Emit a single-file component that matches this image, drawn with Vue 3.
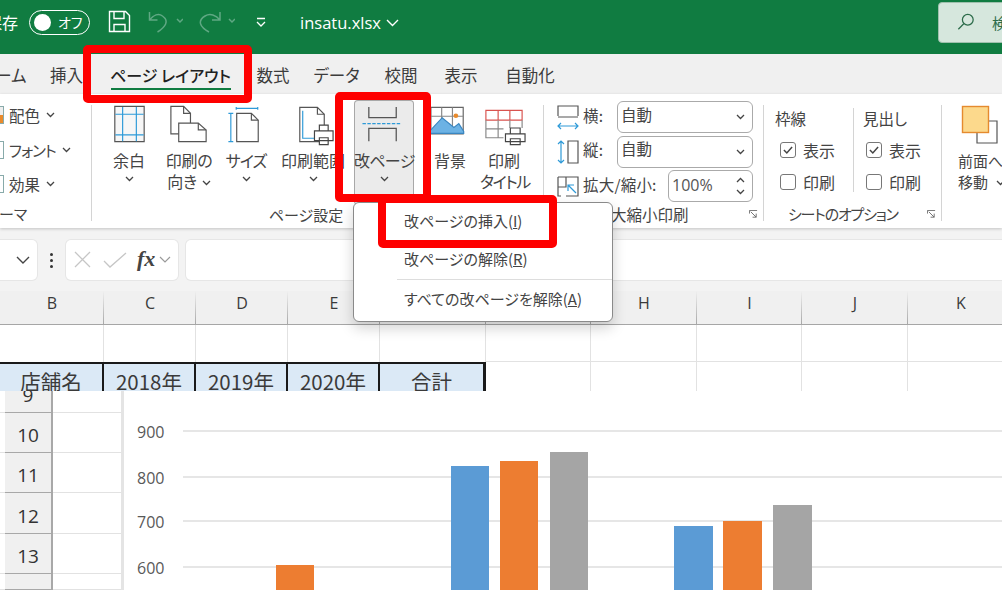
<script setup>
const tabs = [
  { text: 'ーム', w: 52 },
  { text: '挿入', w: 59 },
  { text: 'ページ レイアウト', w: 147, active: true },
  { text: '数式', w: 60 },
  { text: 'データ', w: 67 },
  { text: '校閲', w: 62 },
  { text: '表示', w: 58 },
  { text: '自動化', w: 80 }
]
const cols = [
  { l: 'B', w: 104 }, { l: 'C', w: 92 }, { l: 'D', w: 92 }, { l: 'E', w: 92 },
  { l: '', w: 106 }, { l: '', w: 105 }, { l: 'H', w: 106 }, { l: 'I', w: 105 },
  { l: 'J', w: 106 }, { l: 'K', w: 106 }
]
const tableCells = ['店舗名', '2018年', '2019年', '2020年', '合計']
const rows = [
  { n: 9, h: 22 }, { n: 10, h: 40 }, { n: 11, h: 40 },
  { n: 12, h: 41 }, { n: 13, h: 40 }, { n: '', h: 16 }
]
const grid = [
  { t: '900', y: 431 }, { t: '800', y: 477 }, { t: '700', y: 521 }, { t: '600', y: 567 }
]
const bars = [
  { x: 276, w: 38, y: 565, c: '#ed7d31' },
  { x: 451, w: 38, y: 466, c: '#5b9bd5' },
  { x: 500, w: 38, y: 461, c: '#ed7d31' },
  { x: 550, w: 38, y: 452, c: '#a5a5a5' },
  { x: 674, w: 39, y: 526, c: '#5b9bd5' },
  { x: 723, w: 39, y: 521, c: '#ed7d31' },
  { x: 773, w: 39, y: 505, c: '#a5a5a5' }
]
</script>

<template>
  <div class="page">
    <header class="title">
      <span class="save-label">保存</span>
      <div class="toggle"><i class="knob"></i><span>オフ</span></div>
      <svg class="qat" width="24" height="24" viewBox="107 10 24 24" fill="none" stroke="#fff" stroke-width="1.4">
        <path d="M108.5 11.5h16l4 4v16h-20z" />
        <path d="M113 11.5v7h10v-7M113 31.5v-7h11v7" />
      </svg>
      <svg class="undo" width="36" height="24" viewBox="146 10 36 24" fill="none" stroke="#5fa883" stroke-width="1.5">
        <path d="M148.5 12v8h8M148.5 20c4-5 9-7 13-4 7 5 3 11-5 16" />
        <path d="M176 19l3 3 3-3" />
      </svg>
      <svg class="redo" width="36" height="24" viewBox="198 10 36 24" fill="none" stroke="#5fa883" stroke-width="1.5">
        <path d="M219 12v8h-8M219 20c-4-5-10-7-15-4-8 5-5 11 4 16" />
        <path d="M228 19l3 3 3-3" />
      </svg>
      <svg class="custom" width="12" height="12" viewBox="0 0 12 12" fill="none" stroke="#fff" stroke-width="1.3">
        <path d="M2 2.5h8M2 6l4 4 4-4" />
      </svg>
      <span class="fname">insatu.xlsx</span>
      <svg class="fchev" width="13" height="8" viewBox="0 0 13 8" fill="none" stroke="#fff" stroke-width="1.4">
        <path d="M1 1l5.5 5.5L12 1" />
      </svg>
      <div class="search">
        <svg width="20" height="20" viewBox="0 0 20 20" fill="none" stroke="#2b6b49" stroke-width="1.4">
          <circle cx="12" cy="7.5" r="6" />
          <path d="M7.5 12L1.5 18" />
        </svg>
        <span>検</span>
      </div>
    </header>

    <nav class="tabs">
      <span
        v-for="t in tabs"
        :key="t.text"
        class="tab"
        :class="{ active: t.active }"
        :style="{ width: t.w + 'px' }"
      >{{ t.text }}</span>
    </nav>

    <section class="ribbon">
      <div class="group g-theme">
        <div class="theme-list">
          <div class="theme-row">
            <i class="swatch orange"></i><span>配色</span>
            <svg class="chev" viewBox="0 0 9 6"><path d="M1 1l3.5 3.5L8 1" /></svg>
          </div>
          <div class="theme-row">
            <i class="swatch"></i><span class="tight">フォント</span>
            <svg class="chev" viewBox="0 0 9 6"><path d="M1 1l3.5 3.5L8 1" /></svg>
          </div>
          <div class="theme-row">
            <i class="swatch"></i><span>効果</span>
            <svg class="chev" viewBox="0 0 9 6"><path d="M1 1l3.5 3.5L8 1" /></svg>
          </div>
        </div>
        <div class="glabel left">ーマ</div>
      </div>
      <i class="sep"></i>

      <div class="group g-page">
        <div class="buttons">
          <div class="rb b1">
            <svg viewBox="100 104 58 47" fill="none" stroke-width="1.2">
              <path d="M114.5 106.5h30v36h-30z" fill="#f6f6f6" stroke="#555" />
              <path d="M122.5 107v35M136.5 107v35M115 114.5h29M115 135.5h29" stroke="#2e9ad8" />
            </svg>
            <div class="lbl">余白</div>
            <svg class="chev big" viewBox="0 0 9 6"><path d="M1 1l3.5 3.5L8 1" /></svg>
          </div>
          <div class="rb b2">
            <svg viewBox="158 104 62 47" fill="none" stroke="#555" stroke-width="1.2">
              <path d="M170.5 106.5h13l7 7v21h-20z" fill="#fff" />
              <path d="M183.5 106.5v7h7" />
              <path d="M178.5 123.5h20l8 7v12h-28z" fill="#fff" />
              <path d="M198.5 123.5v7h8" />
            </svg>
            <div class="lbl">印刷の<br />向き<svg class="chev inl" viewBox="0 0 9 6"><path d="M1 1l3.5 3.5L8 1" /></svg></div>
          </div>
          <div class="rb b3">
            <svg viewBox="220 104 52 47" fill="none" stroke-width="1.2">
              <path d="M236.5 113.5h15l7 7v22h-22z" fill="#fff" stroke="#555" />
              <path d="M251.5 113.5v7h7" stroke="#555" />
              <path d="M236 107v3M258 107v3M236 108.5h22M228 113.5h5M228 142.5h5M230.5 113.5v29" stroke="#2e9ad8" />
            </svg>
            <div class="lbl">サイズ</div>
            <svg class="chev big" viewBox="0 0 9 6"><path d="M1 1l3.5 3.5L8 1" /></svg>
          </div>
          <div class="rb b4">
            <svg viewBox="272 104 82 47" fill="none" stroke-width="1.2">
              <path d="M299.5 107.5h18l7 7v28h-25z" fill="#fff" stroke="#555" />
              <path d="M317.5 107.5v7h7" stroke="#555" />
              <path d="M302.5 111v28h12" stroke="#2e9ad8" />
              <path d="M319.5 125.5h9v6h-9zM314.5 131.5h19v10h-19zM319.5 138.5h9v7h-9z" fill="#fff" stroke="#444" />
            </svg>
            <div class="lbl">印刷範囲</div>
            <svg class="chev big" viewBox="0 0 9 6"><path d="M1 1l3.5 3.5L8 1" /></svg>
          </div>
          <div class="rb b5">
            <svg viewBox="354 104 60 47" fill="none" stroke-width="1.3">
              <path d="M368.5 107v11h28v-11" stroke="#555" />
              <path d="M362 124h40" stroke="#2e9ad8" stroke-dasharray="3.5 1.5" />
              <path d="M368.5 142v-13h28v13" stroke="#555" />
            </svg>
            <div class="lbl">改ページ</div>
            <svg class="chev big" viewBox="0 0 9 6"><path d="M1 1l3.5 3.5L8 1" /></svg>
          </div>
          <div class="rb b6">
            <svg viewBox="420 104 60 47" fill="none" stroke-width="1.2">
              <path d="M430.5 107.5h33v27h-33z" fill="#fff" stroke="#666" />
              <path d="M430.5 116.5h33M441.5 107.5v12M452.5 107.5v27" stroke="#888" />
              <path d="M430 131l12-13 12 10 5-4 5 8v2h-22l-12 0z" fill="#6cb2e4" stroke="#3a86c0" />
              <circle cx="456" cy="116" r="2.4" fill="#e98a2c" />
            </svg>
            <div class="lbl">背景</div>
          </div>
          <div class="rb b7">
            <svg viewBox="480 104 48 47" fill="none" stroke-width="1.2">
              <path d="M485.5 110.5h37v10h-37zM498 110.5v10M510 110.5v10" stroke="#d9534f" fill="#fff" />
              <path d="M485.5 120.5v18h18M498 120.5v18M510 120.5v8M485.5 129.5h18M522.5 120.5v8" stroke="#888" />
              <path d="M510.5 128.5h10v6h-10zM505.5 134.5h20v8h-20zM510.5 139.5h10v6h-10z" fill="#fff" stroke="#444" />
            </svg>
            <div class="lbl">印刷<br /><span class="narrow">タイトル</span></div>
          </div>
        </div>
        <div class="glabel page-label">ページ設定</div>
      </div>
      <i class="sep"></i>

      <div class="group g-scale">
        <div class="scale-rows">
          <div class="scale-row">
            <svg width="24" height="26" viewBox="556 103 24 26" fill="none" stroke-width="1.2">
              <path d="M558 114v-9h20v9M558 114v1M578 114v1M558 116h20" stroke="#555" />
              <path d="M558 125h20M561 122l-3 3 3 3M575 122l3 3-3 3" stroke="#2e9ad8" />
            </svg>
            <span class="s-label">横:</span>
            <div class="select"><span>自動</span><svg class="chev" viewBox="0 0 9 6"><path d="M1 1l3.5 3.5L8 1" /></svg></div>
          </div>
          <div class="scale-row">
            <svg width="24" height="26" viewBox="556 138 24 26" fill="none" stroke-width="1.2">
              <path d="M561 140v22M558 143l3-3 3 3M558 159l3 3 3-3" stroke="#2e9ad8" />
              <path d="M568 140h10v22h-10z" stroke="#555" />
            </svg>
            <span class="s-label">縦:</span>
            <div class="select"><span>自動</span><svg class="chev" viewBox="0 0 9 6"><path d="M1 1l3.5 3.5L8 1" /></svg></div>
          </div>
          <div class="scale-row">
            <svg width="24" height="24" viewBox="556 173 24 24" fill="none" stroke-width="1.2">
              <path d="M566 176h12v19h-12M558 176h8v10h-8v-10M558 186v9h3" stroke="#555" />
              <path d="M576 192l-8-8M568 190v-6h6" stroke="#2e9ad8" />
            </svg>
            <span class="s-label">拡大/縮小:</span>
            <div class="select spin">
              <span>100%</span>
              <div class="spin-arrows">
                <svg class="chev" viewBox="0 0 9 6"><path d="M1 5l3.5-3.5L8 5" /></svg>
                <svg class="chev" viewBox="0 0 9 6"><path d="M1 1l3.5 3.5L8 1" /></svg>
              </div>
            </div>
          </div>
        </div>
        <div class="glabel scale-label">
          <span>大縮小印刷</span>
          <svg class="launch" viewBox="0 0 10 10"><path d="M.5 4V.5H9M2 2l6 6M8 4v4H4" /></svg>
        </div>
      </div>
      <i class="sep"></i>

      <div class="group g-sheet">
        <div class="sheet-cols">
          <div class="sheet-col">
            <div class="sc-title">枠線</div>
            <div class="chk"><i class="box on"><svg viewBox="0 0 12 12"><path d="M2.5 6l2.5 2.5 4.5-5" /></svg></i>表示</div>
            <div class="chk"><i class="box"></i>印刷</div>
          </div>
          <i class="inner-sep"></i>
          <div class="sheet-col second">
            <div class="sc-title">見出し</div>
            <div class="chk"><i class="box on"><svg viewBox="0 0 12 12"><path d="M2.5 6l2.5 2.5 4.5-5" /></svg></i>表示</div>
            <div class="chk"><i class="box"></i>印刷</div>
          </div>
        </div>
        <div class="glabel sheet-label">
          <span>シートのオプション</span>
          <svg class="launch" viewBox="0 0 10 10"><path d="M.5 4V.5H9M2 2l6 6M8 4v4H4" /></svg>
        </div>
      </div>
      <i class="sep"></i>

      <div class="group g-arrange">
        <svg class="front" width="44" height="40" viewBox="958 104 44 40" fill="none">
          <path d="M977 121h20v22h-20z" stroke="#555" stroke-width="1.2" fill="#fff" />
          <rect x="962.5" y="106.5" width="26" height="26" fill="#fcd98c" stroke="#e58a2e" stroke-width="1.4" />
        </svg>
        <div class="lbl arr">前面へ<br />移動 <svg class="chev inl" viewBox="0 0 9 6"><path d="M1 1l3.5 3.5L8 1" /></svg></div>
      </div>
    </section>

    <div class="fbar">
      <div class="namebox">
        <svg width="14" height="9" viewBox="0 0 14 9" fill="none" stroke="#444" stroke-width="1.4"><path d="M1 1l6 6 6-6" /></svg>
      </div>
      <div class="dots"><i></i><i></i><i></i></div>
      <div class="fxbox">
        <svg width="56" height="20" viewBox="0 0 56 20" fill="none" stroke-width="1.3">
          <path d="M2 2l15 15M17 2L2 17" stroke="#c6c6c6" />
          <path d="M31 11l6 6L53 3" stroke="#c6c6c6" />
        </svg>
        <em>fx</em>
        <svg width="12" height="8" viewBox="0 0 12 8" fill="none" stroke="#9a9a9a" stroke-width="1.2"><path d="M1 1l5 5 5-5" /></svg>
      </div>
      <div class="finput"></div>
    </div>

    <div class="colhead">
      <div v-for="(c, i) in cols" :key="i" class="colcell" :style="{ width: c.w + 'px' }">{{ c.l }}</div>
    </div>

    <div class="sheet-row blank">
      <div v-for="(c, i) in cols" :key="i" class="cell" :style="{ width: c.w + 'px' }"></div>
    </div>
    <div class="sheet-row data">
      <div
        v-for="(c, i) in cols"
        :key="i"
        class="cell"
        :class="{ tcell: i < 5, last: i === 4 }"
        :style="{ width: c.w + 'px' }"
      >{{ tableCells[i] }}</div>
    </div>

    <div class="lower">
      <div class="rowlist">
        <div v-for="r in rows" :key="r.n" class="lrow" :style="{ height: r.h + 'px' }">
          <div class="rhead"><span>{{ r.n }}</span></div>
          <div class="rcell"></div>
        </div>
      </div>
      <svg class="chart" viewBox="125 391 877 199" width="877" height="199">
        <g v-for="g in grid" :key="g.t">
          <line x1="183" x2="1002" :y1="g.y" :y2="g.y" stroke="#dedede" stroke-width="1.5" />
          <text x="137" :y="g.y + 7" class="axis">{{ g.t }}</text>
        </g>
        <rect
          v-for="(b, i) in bars"
          :key="i"
          :x="b.x"
          :y="b.y"
          :width="b.w"
          :height="590 - b.y"
          :fill="b.c"
        />
      </svg>
    </div>

    <div class="menu">
      <div class="mitem">改ページの挿入(<u>I</u>)</div>
      <div class="mitem">改ページの解除(<u>R</u>)</div>
      <div class="mline"></div>
      <div class="mitem">すべての改ページを解除(<u>A</u>)</div>
    </div>

    <div class="mark m1"></div>
    <div class="mark m2"></div>
    <div class="mark m3"></div>
  </div>
</template>

<style>
html, body { margin: 0; padding: 0; overflow: hidden; background: #fff; }
</style>

<style scoped>
.page {
  position: relative;
  width: 1002px;
  height: 590px;
  overflow: hidden;
  background: #fff;
  color: #444;
  font-family: "Noto Sans CJK JP", sans-serif;
  font-feature-settings: "palt";
  font-size: 15px;
}
svg { display: block; }

/* title bar */
.title {
  height: 54px;
  background: #107c41;
  color: #fff;
  display: flex;
  align-items: center;
  overflow: hidden;
}
.save-label { margin-left: -14px; width: 32px; font-size: 16px; padding-bottom: 10px; }
.toggle {
  margin: 0 0 10px 11px;
  width: 61px;
  height: 25px;
  box-sizing: border-box;
  border: 1.5px solid #fff;
  border-radius: 13px;
  display: flex;
  align-items: center;
  font-size: 14px;
}
.knob { width: 17px; height: 17px; margin-left: 4px; background: #fff; border-radius: 50%; }
.toggle span { margin-left: 7px; }
.qat { margin: 0 0 10px 18px; }
.undo { margin: 0 0 10px 15px; }
.redo { margin: 0 0 10px 16px; }
.custom { margin: 0 0 10px 20px; }
.fname { margin: 0 0 10px 33px; font: 16.5px "Open Sans", sans-serif; }
.fchev { margin: 0 0 8px 5px; }
.search {
  margin: -10px -6px 0 auto;
  width: 70px;
  height: 41px;
  box-sizing: border-box;
  padding-left: 18px;
  display: flex;
  align-items: center;
  gap: 17px;
  background: #d6e7dd;
  border: 1px solid #9fc0ad;
  border-radius: 4px;
  color: #2b6b49;
  white-space: nowrap;
}

/* tabs */
.tabs {
  height: 40px;
  margin-left: -15px;
  background: #f0f0f0;
  display: flex;
  font-size: 16.5px;
  color: #3c3c3c;
}
.tab {
  position: relative;
  flex: none;
  box-sizing: border-box;
  text-align: center;
  line-height: 42px;
}
.tab.active { font-size: 16px; font-weight: 500; color: #222; padding-left: 2px; }
.tab.active::after {
  content: "";
  position: absolute;
  left: 15px;
  right: 12px;
  top: 34px;
  height: 2px;
  background: #107c41;
}

/* ribbon */
.ribbon {
  height: 134px;
  display: flex;
  background: #fff;
  box-shadow: 0 1px 3px rgba(0, 0, 0, .2);
  position: relative;
}
.group { position: relative; display: flex; flex-direction: column; flex: none; }
.sep { flex: none; width: 1px; height: 116px; margin-top: 11px; background: #d4d4d4; }
.glabel { margin-top: auto; height: 24px; line-height: 20px; font-size: 15px; text-align: center; color: #444; }
.chev { width: 9px; height: 6px; fill: none; stroke: #444; stroke-width: 1.3; }
.chev.big { margin: 5px auto 0; }
.chev.inl { display: inline-block; margin-left: 5px; vertical-align: 2px; }

.g-theme { width: 91px; }
.theme-list { padding-top: 4px; }
.theme-row { height: 34.5px; display: flex; align-items: center; font-size: 15.5px; }
.tight { letter-spacing: -1px; }
.swatch { width: 4px; height: 18px; margin-right: 5px; box-sizing: border-box; border: 1px solid #8aa; border-left: 0; }
.swatch.orange { background: linear-gradient(#eee 50%, #e98a2c 50%); }
.theme-row .chev { margin-left: 6px; }
.left { text-align: left; margin-left: -1px; }

.g-page { width: 451px; }
.buttons { display: flex; padding-left: 8px; }
.rb { flex: none; padding-top: 10px; text-align: center; }
.rb > svg:first-child { width: 100%; height: 46px; overflow: visible; }
.lbl { line-height: 21px; font-size: 16px; white-space: nowrap; }
.b1 { width: 58px; }
.b2 { width: 62px; }
.b2 .lbl { letter-spacing: -.3px; }
.b3 { width: 52px; }
.b3 .lbl { letter-spacing: -1px; }
.b4 { width: 82px; }
.b5 {
  width: 60px;
  height: 105px;
  margin-top: 6px;
  padding-top: 4px;
  box-sizing: border-box;
  background: #ebebeb;
  border-radius: 4px;
  box-shadow: inset 0 0 0 1px #a8a8a8;
}
.b5 .lbl { letter-spacing: -.7px; }
.b6 { width: 60px; margin-left: 6px; }
.b7 { width: 48px; }
.narrow { letter-spacing: -1.4px; }
.page-label { padding-left: 107px; margin-right: 130px; }

.g-scale { width: 219px; }
.scale-rows { padding: 6px 10px 0 12px; }
.scale-row { height: 34.5px; display: flex; align-items: center; font-size: 15.5px; }
.s-label { margin-left: 3px; padding-bottom: 5px; white-space: nowrap; letter-spacing: .2px; }
.select {
  margin-left: auto;
  width: 136px;
  height: 32px;
  box-sizing: border-box;
  border: 1px solid #aaa;
  border-radius: 6px;
  padding: 0 7px 0 3px;
  display: flex;
  align-items: center;
  justify-content: space-between;
  font-size: 15.5px;
}
.select > span { padding-bottom: 7px; }
.spin { width: 85px; font: 16px "Open Sans", sans-serif; color: #555; }
.spin > span { padding-bottom: 3px; }
.spin-arrows { display: flex; flex-direction: column; gap: 6px; }
.scale-label { display: flex; justify-content: space-between; padding: 0 5px 0 67px; font-size: 15.5px; }
.launch { width: 9px; height: 9px; margin-top: 6px; fill: none; stroke: #666; stroke-width: 1; }

.g-sheet { width: 177px; }
.sheet-cols { display: flex; padding: 12px 0 0 11px; }
.sheet-col { width: 78px; }
.sheet-col.second { margin-left: 9px; width: 70px; }
.inner-sep { width: 1px; height: 84px; margin-top: 2px; background: #d4d4d4; }
.sc-title { height: 28px; line-height: 24px; font-size: 15.5px; }
.chk { height: 32px; padding: 0 0 0 5px; display: flex; align-items: center; gap: 7px; font-size: 16px; }
.second .chk { padding-left: 3px; }
.box { width: 16px; height: 16px; box-sizing: border-box; border: 1px solid #777; border-radius: 3px; }
.box svg { width: 14px; height: 14px; fill: none; stroke: #444; stroke-width: 1.3; }
.sheet-label { display: flex; justify-content: space-between; padding: 0 5px 0 24px; }
.sheet-label span { letter-spacing: -1.2px; }

.g-arrange { width: 80px; }
.front { margin: 10px 0 0 16px; }
.arr { padding: 6px 0 0 16px; font-size: 15px; }

/* formula bar */
.fbar {
  height: 63px;
  box-sizing: border-box;
  background: #f3f3f3;
  padding: 12px 0 11px;
  display: flex;
  align-items: stretch;
}
.namebox {
  width: 37px;
  background: #fff;
  border-radius: 0 5px 5px 0;
  box-shadow: 0 0 0 1px #e6e6e6;
  display: flex;
  align-items: center;
  justify-content: flex-end;
  padding-right: 7px;
  box-sizing: border-box;
}
.dots { width: 29px; display: flex; flex-direction: column; align-items: center; justify-content: center; gap: 3px; }
.dots i { width: 3px; height: 3px; background: #333; border-radius: 50%; }
.fxbox {
  width: 112px;
  box-sizing: border-box;
  background: #fff;
  border-radius: 5px;
  box-shadow: 0 0 0 1px #e6e6e6;
  display: flex;
  align-items: center;
  padding-left: 7px;
}
.fxbox em { margin: -3px 4px 0 8px; font: italic 700 22px "Liberation Serif", serif; color: #444; }
.finput {
  flex: 1;
  margin-left: 8px;
  background: #fff;
  border-radius: 5px 0 0 5px;
  box-shadow: 0 0 0 1px #e6e6e6;
}

/* sheet */
.colhead {
  display: flex;
  background: #f0f0f0;
  border-bottom: 1px solid #a6a6a6;
  height: 33px;
  overflow: hidden;
}
.colcell {
  position: relative;
  flex: none;
  box-sizing: border-box;
  text-align: center;
  font: 16px/24px "Open Sans", sans-serif;
  color: #3a3a3a;
}
.colcell::after {
  content: "";
  position: absolute;
  right: 0;
  top: 0;
  bottom: 0;
  width: 1px;
  background: linear-gradient(#f0f0f0, #a8a8a8);
}
.sheet-row { display: flex; overflow: hidden; }
.sheet-row.blank { height: 37px; }
.sheet-row.data { height: 29px; }
.cell {
  flex: none;
  box-sizing: border-box;
  border-right: 1px solid #e2e2e2;
  border-bottom: 1px solid #e2e2e2;
}
.blank .cell:nth-child(-n+5) { border-bottom: 0; }
.data .cell { border-bottom: 0; }
.tcell {
  background: #dbe9f6;
  border-top: 2px solid #1a1a1a;
  border-right: 2px solid #1a1a1a;
  text-align: center;
  font-size: 20.5px;
  line-height: 34px;
  color: #3a3a3a;
  overflow: hidden;
  white-space: nowrap;
}
.last { border-right-width: 3px; }

.lower { height: 199px; display: flex; background: #fff; position: relative; }
.rowlist { width: 121px; flex: none; border-right: 3px solid #e4e4e4; margin-right: 1px; }
.lrow { display: flex; box-sizing: border-box; border-bottom: 1px solid #e2e2e2; padding-left: 5px; }
.rhead {
  width: 48px;
  box-sizing: border-box;
  background: #f0f0f0;
  border-right: 2px solid #a8a8a8;
  border-bottom: 1px solid #a8a8a8;
  margin-bottom: -1px;
  display: flex;
  align-items: flex-end;
  justify-content: center;
  overflow: hidden;
  font: 19px/34px "Open Sans", sans-serif;
  color: #333;
}
.rcell { flex: 1; }
.chart { flex: none; }
.axis { font: 16px "Open Sans", sans-serif; fill: #595959; }

/* menu */
.menu {
  position: absolute;
  left: 353px;
  top: 202px;
  width: 260px;
  height: 120px;
  box-sizing: border-box;
  background: #fff;
  border: 1px solid #8a8a8a;
  border-radius: 6px;
  box-shadow: 0 6px 14px rgba(0, 0, 0, .18);
}
.mitem { height: 38px; line-height: 36px; padding-left: 50px; font-size: 15px; color: #444; }
.mline { height: 1px; margin: 0 0 1px 43px; background: #ddd; }

/* annotation frames */
.mark { position: absolute; box-sizing: border-box; border: 8px solid #fe0000; border-radius: 5px; }
.m1 { left: 83px; top: 45px; width: 169px; height: 58px; }
.m2 { left: 335px; top: 92px; width: 96px; height: 110px; }
.m3 { left: 378px; top: 195px; width: 179px; height: 53px; }
</style>
